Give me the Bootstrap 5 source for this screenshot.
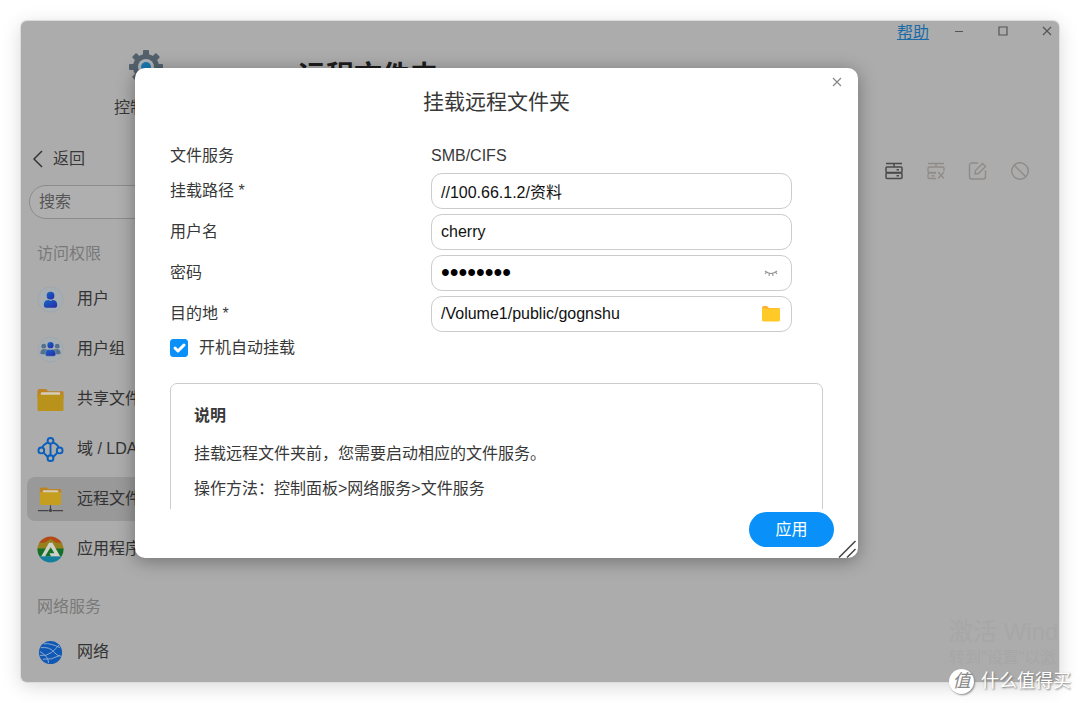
<!DOCTYPE html>
<html lang="zh-CN">
<head>
<meta charset="utf-8">
<meta name="viewport" content="width=device-width, initial-scale=1">
<title>远程文件夹</title>
<link href="https://cdn.jsdelivr.net/npm/bootstrap@5.3.0/dist/css/bootstrap.min.css" rel="stylesheet">
<style>
body{font-family:"Liberation Sans","Noto Sans CJK SC",sans-serif;font-size:16px;line-height:24px;color:#383838;background:#fff;padding:21px}
.app-window{min-height:calc(100vh - 42px);background:#acacac;border-radius:6px;box-shadow:0 0 0 1px #dcdcdc,0 4px 20px rgba(0,0,0,.16)}
.side{width:250px;padding:29px 6px 8px}
.side .back{margin:30px 6px 17px;gap:10px}
.search-box{height:34px;margin:0 2px;width:auto;border:1px solid #8c8c8c;border-radius:17px;background:#afafaf;padding:0 9px;color:#555;font-size:16px}
.search-box::placeholder{color:#555;opacity:1}
.group-name{color:#797979;margin:23px 10px 11px;font-size:16px;line-height:24px;font-weight:400}
.group-name.later{margin-top:24px}
.entry{height:44px;padding:0 10px;gap:13px;border-radius:8px;color:#333;text-decoration:none;white-space:nowrap}
.entry svg{width:27px;height:27px;flex:none}
.entries{gap:6px}
.entry.current{background:#999}
.main-pane{min-width:0}
.win-bar{height:20px;padding-right:6px}
.win-bar a{color:#1a6ba8;line-height:20px;margin-right:24px;padding-top:3px}
.plain{border:0;background:none;padding:0;color:inherit;line-height:1;display:flex;align-items:center;justify-content:center}
.win-bar .plain{width:12px;height:12px;color:#555}
.win-bar .set{gap:32px}
.page-title{font-size:28px;line-height:32px;font-weight:700;color:#1d1d1d;margin:20px 0 0 27px;gap:8px}
.tools{gap:22px;margin:68px 29px 0 0}
.tools .plain{width:20px;height:20px;color:#8e8b88}
.tools .plain.on{color:#4a4a4a}
.activate{right:0;bottom:12px;width:110px;white-space:nowrap;color:#a7a7a7;font-size:16px;line-height:24px}
.activate strong{display:block;font-weight:400;font-size:24px;line-height:28px}
.dialog-box{left:114px;right:201px;top:47px;min-width:480px;background:#fff;border-radius:10px;box-shadow:0 3px 18px rgba(0,0,0,.35)}
.dialog-box h2{font-size:21px;line-height:28px;font-weight:400;margin:0;padding-top:20px}
.close-x{top:8px;right:15px;width:12px;height:12px;color:#888}
.fields{padding:28px 66px 0 35px}
.field{margin-bottom:5px}
.field label,.field .name{flex:0 0 261px}
.field .form-control{height:36px;border:1px solid #ccc;border-radius:11px;padding:0 9px;font-size:16px;color:#111}
.field .form-control.with-tool{padding-right:42px}
.field .form-control[type=password]{font-size:25px;color:#000}
.in-tool{right:11px;top:8px;width:20px;height:20px}
.auto-row{margin:4px 35px 0;gap:11px}
.auto-row .form-check-input{width:18px;height:18px;margin:0;border-radius:3px}
.auto-row .form-check-input:checked{background-color:#0a91f9;border-color:#0a91f9;background-size:20px 20px}
.note-view{height:126px;overflow:hidden;margin:23px 35px 0}
.note{border:1px solid #ccc;border-radius:7px;padding:20px 23px 28px}
.note h3{font-size:16px;line-height:24px;font-weight:700;margin:0 0 14px}
.note p{margin:0 0 11px}
.dialog-foot{padding:3px 24px 11px}
.apply{width:85px;height:35px;border:0;border-radius:18px;background:#0a91f9;color:#fff;padding:0}
.grip{right:1px;bottom:0}
.brand{right:9px;bottom:9px;color:#fff;font-size:18px;line-height:26px;gap:7px;text-shadow:1px 1px 2px #777}
.brand .seal{width:25px;height:25px;border-radius:50%;background:#fff;color:#888;text-shadow:none;font-style:italic;line-height:25px;box-shadow:1px 1px 2px #888}
</style>
</head>
<body class="position-relative">
<div class="app-window d-flex position-relative">
  <nav class="side flex-shrink-0" aria-label="控制面板">
    <div class="d-flex flex-column align-items-center">
      <svg width="34" height="34" viewBox="0 0 34 34"><g fill="#54616d"><circle cx="17" cy="17" r="13"/><rect x="14" y="0" width="6" height="34" rx="1"/><rect x="14" y="0" width="6" height="34" rx="1" transform="rotate(45 17 17)"/><rect x="14" y="0" width="6" height="34" rx="1" transform="rotate(90 17 17)"/><rect x="14" y="0" width="6" height="34" rx="1" transform="rotate(135 17 17)"/></g><circle cx="17" cy="17" r="8" fill="#b0b5b8"/><circle cx="17" cy="17" r="5" fill="#1979b2"/></svg>
      <div class="mt-2 pt-1">控制面板</div>
    </div>
    <button type="button" class="plain back"><svg width="10" height="18" viewBox="0 0 10 18" fill="none" stroke="#333" stroke-width="1.500"><path d="M9 1 1 9l8 8"/></svg><span>返回</span></button>
    <div class="d-grid"><input class="search-box" type="search" placeholder="搜索" aria-label="搜索"></div>
    <h2 class="group-name">访问权限</h2>
    <div class="entries d-flex flex-column">
      <a href="#" class="entry d-flex align-items-center"><svg viewBox="0 0 28 28"><defs><linearGradient id="blue" x1="0" y1="0" x2="1" y2="1"><stop offset="0" stop-color="#1769c4"/><stop offset="1" stop-color="#2529a8"/></linearGradient></defs><circle cx="14" cy="14" r="13" fill="#a6aeb3" stroke="#a0a8ad"/><circle cx="14" cy="10" r="4" fill="url(#blue)"/><path d="M7 20q0-5.500 5-5.500l2 1 2-1q5 0 5 5.500 0 2.500-2 2.500H9q-2 0-2-2.500z" fill="url(#blue)"/></svg>用户</a>
      <a href="#" class="entry d-flex align-items-center"><svg viewBox="0 0 28 28"><circle cx="14" cy="14" r="13" fill="#a6aeb3" stroke="#a0a8ad"/><g fill="#54708f"><circle cx="7" cy="10.500" r="2.500"/><circle cx="21" cy="10.500" r="2.500"/><path d="M3.500 18q0-4 3-4.300h4V19H5q-1.500 0-1.500-1zM24.500 18q0-4-3-4.300h-4V19H23q1.500 0 1.500-1z"/></g><circle cx="14" cy="9.500" r="3.200" fill="url(#blue)"/><path d="M8.500 19q0-5 4-5.300l1.500.8 1.500-.8q4 .3 4 5.300 0 2-2 2h-7q-2 0-2-2z" fill="url(#blue)" stroke="#a6b0b6" stroke-width=".5"/></svg>用户组</a>
      <a href="#" class="entry d-flex align-items-center"><svg viewBox="0 0 28 28"><path d="M.5 5q0-2 2-2h7l2 2.500H26q1.500 0 1.500 1.500v6H.5z" fill="#bd8324"/><rect x="4" y="6.500" width="20" height="5" rx="1" fill="#d4cdbb"/><path d="M.5 9h27v15.500q0 1.500-1.500 1.500H2q-1.500 0-1.500-1.500z" fill="#b8921b"/></svg>共享文件夹</a>
      <a href="#" class="entry d-flex align-items-center"><svg viewBox="0 0 28 28" fill="none" stroke="#095fbd" stroke-width="2"><path d="M14 7v14M11.800 6.500Q6 9 5.500 12M16.200 6.500Q22 9 22.500 12M7 17.500 11.500 22M21 17.500 16.500 22"/><circle cx="14" cy="5" r="3"/><circle cx="4.500" cy="15" r="3"/><circle cx="23.500" cy="15" r="3"/><circle cx="14" cy="23" r="3"/></svg>域 / LDAP</a>
      <a href="#" class="entry current d-flex align-items-center" aria-current="page"><svg viewBox="0 0 28 28"><path d="M3 3q0-1.500 1.500-1.500h5L12 3h11.500Q25 3 25 4.500V10H3z" fill="#bd8324"/><rect x="6" y="4.500" width="16" height="4" rx="1" fill="#d4cdbb"/><path d="M3 6.500h22v12q0 1.200-1.200 1.200H4.200Q3 19.700 3 18.500z" fill="#c59e20"/><path d="M1 25.500h11M16 25.500h11M14 20v4" stroke="#444" stroke-width="1.200"/><circle cx="14" cy="25.300" r="1.700" fill="#444"/></svg>远程文件夹</a>
      <a href="#" class="entry d-flex align-items-center"><svg viewBox="0 0 28 28"><defs><clipPath id="disc"><circle cx="14" cy="14" r="13.500"/></clipPath></defs><g clip-path="url(#disc)"><path fill="#b34a16" d="M0 0h28v8H0z"/><path fill="#968020" d="M0 7h8l6-4 6 4h8v7H0z"/><path fill="#137026" d="M0 13h28v8H0z"/><path fill="#147f9d" d="M0 21h28v7H0z"/></g><path d="M12.500 7h3.500L24 21h-9.500l-1.500-3h5L14.200 11.500 8.500 21h-4z" fill="#ccd2c9"/></svg>应用程序权限</a>
    </div>
    <h2 class="group-name later">网络服务</h2>
    <a href="#" class="entry d-flex align-items-center"><svg viewBox="0 0 28 28"><circle cx="14" cy="14" r="12" fill="#1158b5"/><g fill="none" stroke="#8fadd0" stroke-width="1"><path d="M7 5q7-1 17 4M4 9q9-1 13 4 4 5 8 5M3 17q7 1 12-3t8-8M3 13q9 5 9 12M6 21q9 1 18-4"/></g></svg>网络</a>
  </nav>
  <main class="main-pane flex-grow-1">
    <div class="win-bar d-flex justify-content-end align-items-center"><a href="#">帮助</a>
      <div class="set d-flex">
      <button type="button" class="plain" aria-label="最小化"><svg width="10" height="10" viewBox="0 0 10 10" stroke="currentColor"><path d="M1 5.500h8"/></svg></button>
      <button type="button" class="plain" aria-label="最大化"><svg width="10" height="10" viewBox="0 0 10 10" fill="none" stroke="currentColor" stroke-width="1.200"><path d="M1 1h8v8H1z"/></svg></button>
      <button type="button" class="plain" aria-label="关闭"><svg width="10" height="10" viewBox="0 0 10 10" stroke="currentColor" stroke-width="1.200"><path d="m1 1 8 8M9 1 1 9"/></svg></button></div>
    </div>
    <h1 class="page-title d-flex align-items-center">远程文件夹 <svg width="18" height="18" viewBox="0 0 18 18" fill="none" stroke="#777" stroke-width="1.500"><circle cx="9" cy="9" r="8"/><path d="M9 8v5M9 4.500v1.500"/></svg></h1>
    <div class="tools d-flex justify-content-end">
      <button type="button" class="plain on" aria-label="挂载"><svg width="20" height="20" viewBox="0 0 20 20" fill="none" stroke="currentColor" stroke-width="1.500"><path d="M2 2.500h16M10 2.500V6"/><rect x="2" y="6" width="16" height="5.500" rx="1"/><rect x="2" y="12" width="16" height="5.500" rx="1"/><path d="M12.500 8.800H15M12.500 14.800H15"/></svg></button>
      <button type="button" class="plain" aria-label="卸载"><svg width="20" height="20" viewBox="0 0 20 20" fill="none" stroke="currentColor" stroke-width="1.300"><path d="M2 2.500h16M10 2.500V6M10 11.500H3.500Q2 11.500 2 10V7.500Q2 6 3.500 6h13Q18 6 18 7.500V10M10 17.500H3.500Q2 17.500 2 16v-2.500Q2 12 3.500 12H10M5 14.800h4M12 11l6 6.500M18 11l-6 6.500"/></svg></button>
      <button type="button" class="plain" aria-label="编辑"><svg width="20" height="20" viewBox="0 0 20 20" fill="none" stroke="currentColor" stroke-width="1.400"><path d="M10 2H4Q1.500 2 1.500 4.500v11Q1.500 18 4 18h11q2.500 0 2.500-2.500v-6M7 13l.5-3.500 7-7 3 3-7 7z"/></svg></button>
      <button type="button" class="plain" aria-label="禁用"><svg width="20" height="20" viewBox="0 0 20 20" fill="none" stroke="currentColor" stroke-width="1.400"><circle cx="10" cy="10" r="8.300"/><path d="m4.500 4.500 11 11"/></svg></button>
    </div>
  </main>
  <div class="activate position-absolute"><strong>激活 Wind</strong>转到"设置"以激</div>

  <section class="dialog-box position-absolute" role="dialog" aria-labelledby="dlg-title">
    <button type="button" class="plain close-x position-absolute" aria-label="关闭"><svg width="10" height="10" viewBox="0 0 10 10" stroke="currentColor" stroke-width="1.200"><path d="m1 1 8 8M9 1 1 9"/></svg></button>
    <h2 id="dlg-title" class="text-center">挂载远程文件夹</h2>
    <form class="m-0">
      <div class="fields">
        <div class="field d-flex"><span class="name">文件服务</span><span>SMB/CIFS</span></div>
        <div class="field d-flex align-items-center"><label for="path">挂载路径 *</label><input id="path" class="form-control" value="//100.66.1.2/资料"></div>
        <div class="field d-flex align-items-center"><label for="user">用户名</label><input id="user" class="form-control" value="cherry"></div>
        <div class="field d-flex align-items-center"><label for="pass">密码</label><div class="position-relative flex-grow-1"><input id="pass" type="password" class="form-control with-tool" value="cherry88"><button type="button" class="plain in-tool position-absolute" aria-label="显示密码"><svg width="16" height="20" viewBox="0 0 16 20" fill="none" stroke="#999" stroke-width="1.200"><path d="M2 8q6 5 12 0M3.500 9l-1.500 2M6.500 10.500 6 13M9.500 10.500l.5 2.500M12.500 9l1.500 2"/></svg></button></div></div>
        <div class="field d-flex align-items-center mb-0"><label for="dest">目的地 *</label><div class="position-relative flex-grow-1"><input id="dest" class="form-control with-tool" value="/Volume1/public/gognshu"><button type="button" class="plain in-tool position-absolute" aria-label="选择文件夹"><svg width="20" height="20" viewBox="0 0 20 20"><path d="M1 4q0-2 2-2h3l2 2h9.500Q19 4 19 5.500V9H1z" fill="#ffae32"/><path d="M1 4.500h16.500Q19 4.500 19 6v10q0 1.500-1.500 1.500h-15Q1 17.500 1 16z" fill="#ffca28"/></svg></button></div></div>
      </div>
      <div class="auto-row d-flex align-items-center"><input class="form-check-input" type="checkbox" id="auto" checked><label for="auto">开机自动挂载</label></div>
      <div class="note-view"><div class="note"><h3>说明</h3><p>挂载远程文件夹前，您需要启动相应的文件服务。</p><p>操作方法：控制面板&gt;网络服务&gt;文件服务</p></div></div>
      <div class="dialog-foot d-flex justify-content-end"><button type="submit" class="apply">应用</button></div>
    </form>
    <svg class="grip position-absolute" width="19" height="18" viewBox="0 0 19 18" stroke="#444" stroke-width="1.500" fill="none"><path d="M1 17.500 17.500 1M9 17.500 17.500 9"/></svg>
  </section>
</div>
<div class="brand position-absolute d-flex align-items-center"><span class="seal text-center">值</span><span>什么值得买</span></div>
<script src="https://cdn.jsdelivr.net/npm/bootstrap@5.3.0/dist/js/bootstrap.bundle.min.js"></script>
</body>
</html>
